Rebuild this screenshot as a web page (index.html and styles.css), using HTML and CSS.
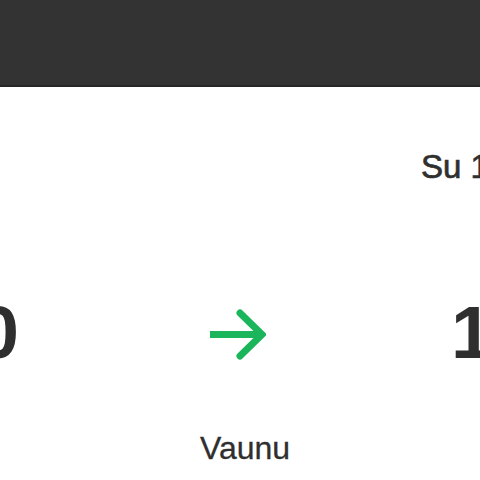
FILE: index.html
```html
<!DOCTYPE html>
<html lang="fi">
<head>
<meta charset="utf-8">
<title>Matka</title>
<link rel="stylesheet" href="styles.css">
</head>
<body>
<header class="topbar"></header>
<main class="trip">
  <div class="date">Su 12.5.</div>
  <div class="times">
    <div class="time time-dep">10:30</div>
    <svg class="arrow" width="56" height="54" viewBox="0 0 56 54" aria-hidden="true">
      <path d="M0 26.5 H50" fill="none" stroke="#1bb55c" stroke-width="7"/>
      <path d="M30 5 L52 26.5 L30 48" fill="none" stroke="#1bb55c" stroke-width="7" stroke-linecap="round" stroke-linejoin="miter"/>
    </svg>
    <div class="time time-arr">14:45</div>
  </div>
  <div class="car">Vaunu</div>
</main>
</body>
</html>
```
FILE: styles.css
```css
html, body {
  margin: 0;
  padding: 0;
  background: #ffffff;
}
body {
  width: 480px;
  height: 480px;
  overflow: hidden;
  font-family: "Liberation Sans", Arial, sans-serif;
  color: #2f2f2f;
}
.topbar {
  height: 85px;
  background: #333333;
  border-bottom: 2px solid #262626;
}
.trip {
  display: flex;
  flex-direction: column;
}
.date {
  margin-top: 60px;
  padding-left: 421px;
  font-size: 33px;
  line-height: 40px;
  white-space: nowrap;
  -webkit-text-stroke: 0.7px #2f2f2f;
}
.times {
  margin-top: 105px;
  display: flex;
  justify-content: center;
  align-items: center;
  height: 80px;
}
.time {
  flex: none;
  font-size: 75px;
  font-weight: 700;
  line-height: 80px;
  white-space: nowrap;
}
.time-dep {
  width: 200px;
  text-align: right;
}
.time-arr {
  width: 210px;
  text-align: left;
}
.arrow {
  flex: none;
  display: block;
  margin: 6px 185px 0 191px;
}
.car {
  margin-top: 56px;
  padding-left: 10px;
  text-align: center;
  font-size: 32px;
  line-height: 40px;
  -webkit-text-stroke: 0.3px #2f2f2f;
}
```
